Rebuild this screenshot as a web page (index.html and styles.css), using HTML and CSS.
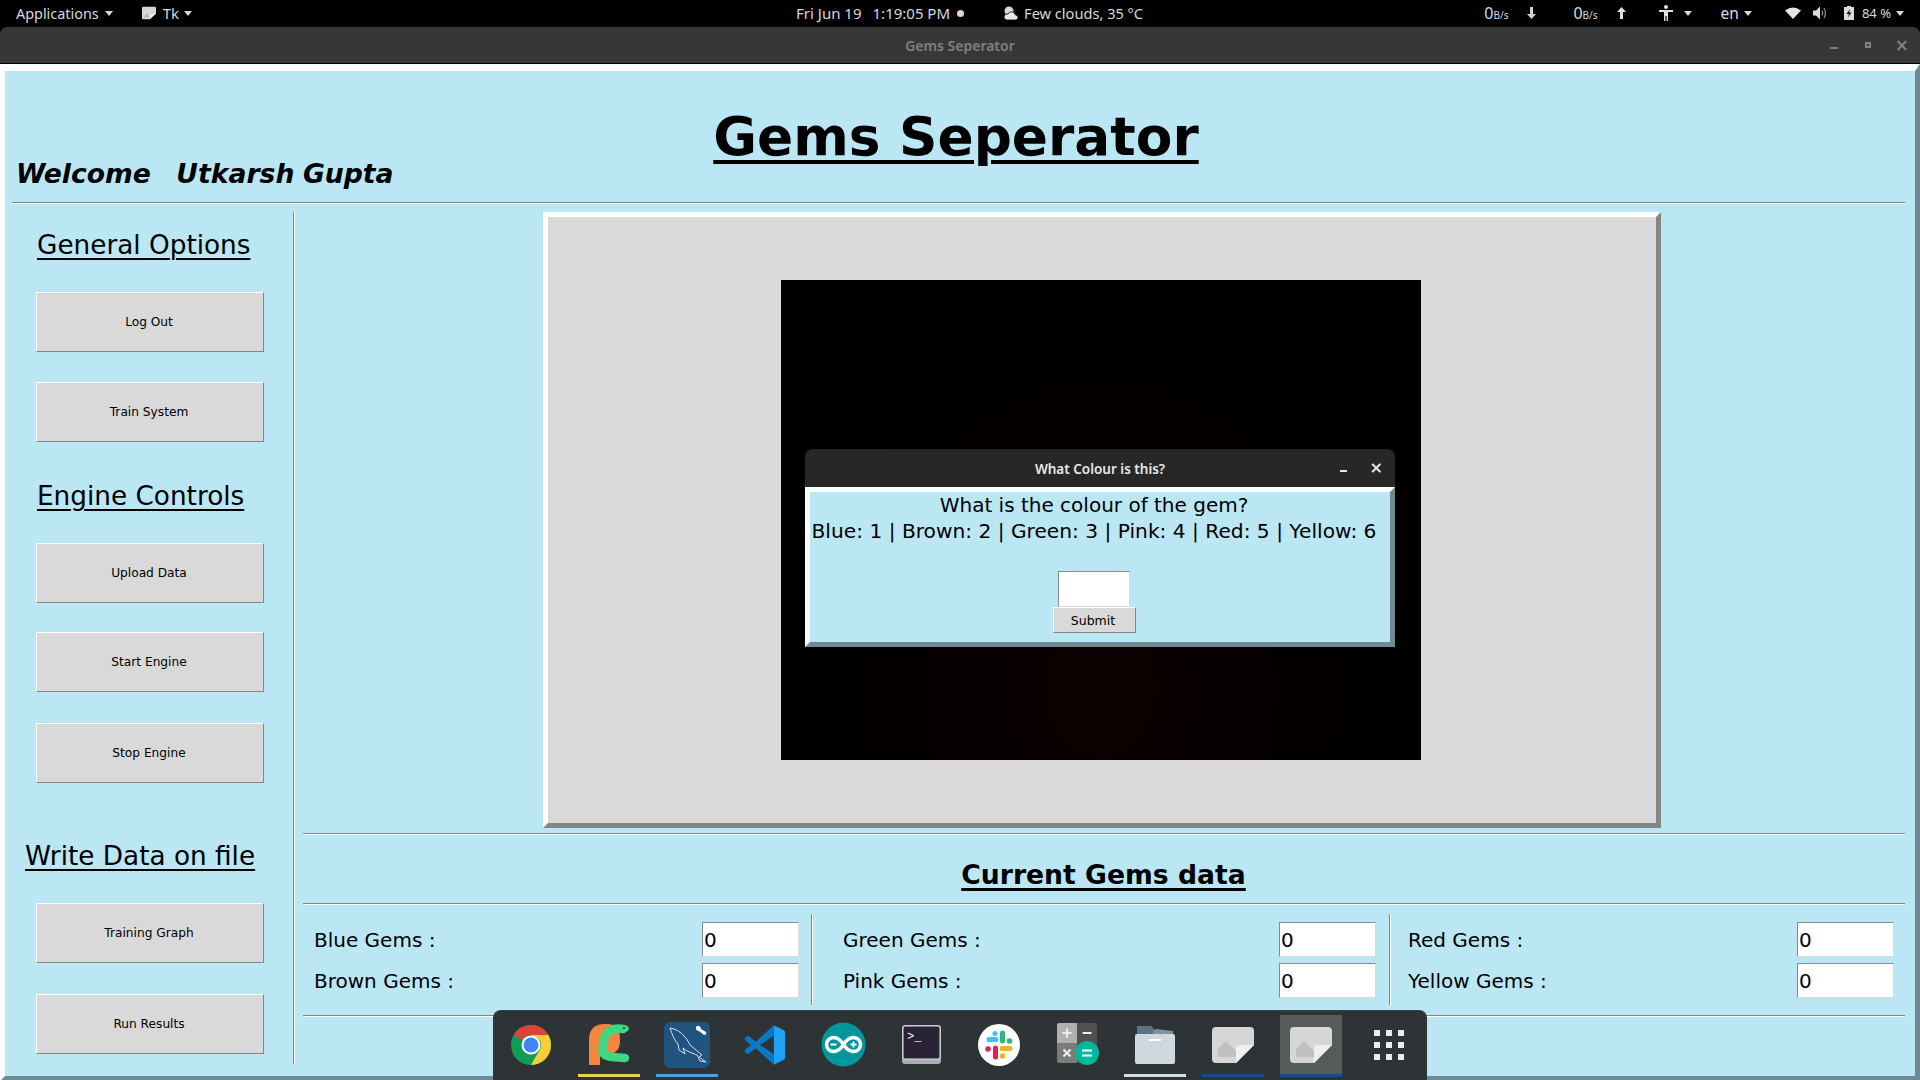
FILE: index.html
```html
<!DOCTYPE html>
<html lang="en">

<head>
  <meta charset="UTF-8">
  <title>Gems Seperator</title>
  <link rel="stylesheet" href="styles.css">
</head>

<body>
  <div class="topbar">
    <span class="tb-apps">Applications</span><i class="caret"></i>
    <svg class="tb-tk" width="14" height="14" viewBox="0 0 42 38"><path d="M4 0H38Q42 0 42 4V20L24 38H4Q0 38 0 34V4Q0 0 4 0Z" fill="#d6d6d6"/><path d="M6 32L14 20L22 32Z" fill="#b5b5b5"/><path d="M25 36V22H41Z" fill="#efefef"/></svg>
    <span class="tb-tkname">Tk</span><i class="caret caret-tk"></i>
    <span class="tb-date">Fri Jun 19</span>
    <span class="tb-time">1:19:05 PM</span>
    <i class="tb-dot"></i>
    <svg class="tb-cloud" width="16" height="16" viewBox="0 0 16 16"><circle cx="6" cy="6" r="4.500" fill="#d8d8d8"/><path d="M4 15a3 3 0 0 1 0-6h1a4 4 0 0 1 7.500 1a2.500 2.500 0 0 1 0 5z" fill="#e8e8e8" stroke="#000" stroke-width=".8"/></svg>
    <span class="tb-weather">Few clouds, 35 °C</span>
    <span class="tb-net tb-net-first">0<small>B/s</small></span>
    <svg class="tb-arrow" width="9" height="12" viewBox="0 0 9 12"><path d="M3 0H6V7H9L4.500 12L0 7H3Z" fill="#c9d4da"/></svg>
    <span class="tb-net tb-net-second">0<small>B/s</small></span>
    <svg class="tb-arrow" width="9" height="12" viewBox="0 0 9 12"><path d="M3 12H6V5H9L4.500 0L0 5H3Z" fill="#d8e2e8"/></svg>
    <svg class="tb-person" width="14" height="16" viewBox="0 0 14 16"><circle cx="7" cy="2" r="2" fill="#e0e0e0"/><path d="M0 5H14V7H9V16H7.600V11H6.400V16H5V7H0Z" fill="#e0e0e0"/></svg>
    <i class="caret caret-person"></i>
    <span class="tb-lang">en</span><i class="caret caret-lang"></i>
    <svg class="tb-wifi" width="16" height="12" viewBox="0 0 16 12"><path d="M0 3.500Q8 -2.500 16 3.500L8 12Z" fill="#e4e4e4"/></svg>
    <svg class="tb-vol" width="15" height="14" viewBox="0 0 15 14"><path d="M0 4.500H3L7 .5V13.500L3 9.500H0Z" fill="#dcdcdc"/><path d="M9 4.500Q10.500 7 9 9.500M11 2Q14 7 11 12" fill="none" stroke="#8a8a8a" stroke-width="1.300"/></svg>
    <svg class="tb-batt" width="10" height="14" viewBox="0 0 10 14"><path d="M3 0H7V1H10V14H0V1H3Z" fill="#dcdcdc"/><path d="M6 3L2.500 8H5L4 11.500L7.500 6.500H5Z" fill="#000"/></svg>
    <span class="tb-pct">84 %</span><i class="caret caret-pct"></i>
  </div>

  <div class="titlebar">
    <span class="titlebar-name">Gems Seperator</span>
    <div class="winbtns">
      <i class="wb-min"></i>
      <i class="wb-max"></i>
      <span class="wb-close">×</span>
    </div>
  </div>

  <div class="window">
    <header class="head">
      <h1 class="app-title">Gems Seperator</h1>
      <p class="welcome">Welcome &nbsp; Utkarsh Gupta</p>
    </header>
    <hr class="rule rule-head">

    <div class="main">
      <aside class="sidebar">
        <h2 class="side-title side-title-general">General Options</h2>
        <button class="side-btn">Log Out</button>
        <button class="side-btn">Train System</button>
        <h2 class="side-title side-title-engine">Engine Controls</h2>
        <button class="side-btn">Upload Data</button>
        <button class="side-btn side-btn-up">Start Engine</button>
        <button class="side-btn">Stop Engine</button>
        <h2 class="side-title side-title-write">Write Data on file</h2>
        <button class="side-btn">Training Graph</button>
        <button class="side-btn side-btn-down">Run Results</button>
      </aside>

      <section class="content">
        <div class="panel">
          <div class="video">
            <div class="dialog">
              <div class="dialog-bar">
                <span class="dialog-name">What Colour is this?</span>
                <i class="dialog-min"></i>
                <span class="dialog-close">×</span>
              </div>
              <div class="dialog-body">
                <p class="dialog-q">What is the colour of the gem?</p>
                <p class="dialog-opts">Blue: 1 | Brown: 2 | Green: 3 | Pink: 4 | Red: 5 | Yellow: 6</p>
                <input class="dialog-input" type="text">
                <button class="dialog-submit">Submit</button>
              </div>
            </div>
          </div>
        </div>

        <hr class="rule">
        <h2 class="data-title">Current Gems data</h2>
        <hr class="rule">

        <div class="gems">
          <div class="gem-col gem-col-a">
            <div class="gem-row"><label>Blue Gems :</label><input class="gem-input" type="text" value="0"></div>
            <div class="gem-row"><label>Brown Gems :</label><input class="gem-input" type="text" value="0"></div>
          </div>
          <div class="gem-col gem-col-b">
            <div class="gem-row"><label>Green Gems :</label><input class="gem-input" type="text" value="0"></div>
            <div class="gem-row"><label>Pink Gems :</label><input class="gem-input" type="text" value="0"></div>
          </div>
          <div class="gem-col gem-col-c">
            <div class="gem-row"><label>Red Gems :</label><input class="gem-input" type="text" value="0"></div>
            <div class="gem-row"><label>Yellow Gems :</label><input class="gem-input" type="text" value="0"></div>
          </div>
        </div>
        <hr class="rule rule-last">
      </section>
    </div>
  </div>

  <div class="dock">
    <div class="dock-item">
      <svg width="40" height="40" viewBox="0 0 40 40">
        <circle cx="20" cy="20" r="20" fill="#0f9d58"/>
        <path d="M20 0A20 20 0 0 1 37.300 10H20A10 10 0 0 0 11.300 15L2.700 10A20 20 0 0 1 20 0Z" fill="#db4437"/>
        <path d="M37.300 10A20 20 0 0 1 20 40L28.700 25A10 10 0 0 0 27 13L20 10Z" fill="#fccd37"/>
        <circle cx="20" cy="20" r="9.500" fill="#fff"/>
        <circle cx="20" cy="20" r="7.500" fill="#4285f4"/>
      </svg>
    </div>
    <div class="dock-item dock-mark-yellow">
      <svg width="40" height="41" viewBox="0 0 40 41">
        <path d="M0 41V16Q0 0 16 0H18Q31 0 31 15V17Q31 30 18 30H11V41Z" fill="#f5843c"/>
        <path d="M34 5C22 3 15 9 15 17C15 22 12 25 14 29C17 34 28 33 36 34" fill="none" stroke="#3fd882" stroke-width="8.500" stroke-linecap="round"/>
        <path d="M26 1H36Q40 2 40 5Q39 9 30 9Z" fill="#3fd882"/>
        <circle cx="35" cy="4" r="1" fill="#143"/>
      </svg>
    </div>
    <div class="dock-item dock-mark-blue">
      <svg width="46" height="46" viewBox="0 0 46 46">
        <rect width="46" height="46" rx="6" fill="#20537e"/>
        <path d="M6 6C14 7 22 14 26 23C30 26 34 30 38 33L35 35L42 40L36 39L33 33C28 31 22 29 19 26L21 32L15 28L14 22C10 18 8 12 6 6Z" fill="none" stroke="#d6e2ea" stroke-width="1"/>
        <path d="M33 9L38 11M32 5A3 3 0 0 0 35 9L40 13Q43 13 42 10L37 7A3 3 0 0 0 33 4Z" fill="#fff"/>
      </svg>
    </div>
    <div class="dock-item">
      <svg width="42" height="42" viewBox="0 0 100 100">
        <path d="M71 3L95 15Q98 17 98 20V80Q98 83 95 85L71 97Z" fill="#21a1f1"/>
        <path d="M71 3L28 42L10 28L2 33V38L16 50L2 62V67L10 72L28 58L71 97V72L38 50L71 28Z" fill="#0a78c4"/>
      </svg>
    </div>
    <div class="dock-item">
      <svg width="45" height="45" viewBox="0 0 45 45">
        <circle cx="22.500" cy="22.500" r="22" fill="#00979c"/>
        <path d="M22.500 22.500C19 17 16 15.500 12.500 15.500A7 7 0 0 0 12.500 29.500C16 29.500 19 28 22.500 22.500C26 17 29 15.500 32.500 15.500A7 7 0 0 1 32.500 29.500C29 29.500 26 28 22.500 22.500Z" fill="none" stroke="#fff" stroke-width="3.500"/>
        <path d="M9.500 22.500H15.500M29.500 22.500H35.500M32.500 19.500V25.500" stroke="#fff" stroke-width="1.800"/>
      </svg>
    </div>
    <div class="dock-item">
      <svg width="39" height="39" viewBox="0 0 39 39">
        <rect width="39" height="39" rx="3" fill="#aab0b1"/>
        <rect x="1" y="1" width="37" height="33" rx="2" fill="#2a2338" stroke="#dfe3e4"/>
        <text x="5" y="15" class="term-text">&gt;_</text>
      </svg>
    </div>
    <div class="dock-item">
      <svg width="42" height="42" viewBox="0 0 42 42">
        <circle cx="21" cy="21" r="21" fill="#fff"/>
        <path d="M11 15.500H18" stroke="#36c5f0" stroke-width="5" stroke-linecap="round"/>
        <path d="M24.500 9V17" stroke="#2eb67d" stroke-width="5" stroke-linecap="round"/>
        <circle cx="31.500" cy="17" r="2.800" fill="#2eb67d"/>
        <circle cx="17" cy="9.500" r="2.500" fill="#36c5f0"/>
        <path d="M24 24.500H32" stroke="#ecb22e" stroke-width="5" stroke-linecap="round"/>
        <circle cx="24.500" cy="32" r="2.800" fill="#ecb22e"/>
        <path d="M17.500 24V33" stroke="#e01e5a" stroke-width="5" stroke-linecap="round"/>
        <circle cx="10" cy="25" r="2.800" fill="#e01e5a"/>
      </svg>
    </div>
    <div class="dock-item">
      <svg class="calc-icon" width="44" height="44" viewBox="0 0 44 44">
        <path d="M2 0H20V20H0V2Q0 0 2 0Z" fill="#b0b0b0"/>
        <path d="M20 0H38Q40 0 40 2V20H20Z" fill="#505050"/>
        <path d="M0 20H20V40H2Q0 40 0 38Z" fill="#7b7b7b"/>
        <path d="M20 20H40V38Q40 40 38 40H20Z" fill="#505050"/>
        <path d="M5.500 10H14.500M10 5.500V14.500M25.500 10H34.500M6.500 26.500L13.500 33.500M13.500 26.500L6.500 33.500" stroke="#eee" stroke-width="2.200"/>
        <circle cx="30" cy="30" r="12" fill="#00b89c"/>
        <path d="M25 27.500H35M25 32.500H35" stroke="#fff" stroke-width="2.200"/>
      </svg>
    </div>
    <div class="dock-item dock-mark-light">
      <svg width="40" height="38" viewBox="0 0 40 38">
        <path d="M2 0H16L21 5H36Q38 5 38 7V16H2Z" fill="#5b7485"/>
        <path d="M18 5L21 3L38 5V12H18Z" fill="#7d95a3"/>
        <rect y="8" width="40" height="30" rx="2" fill="#cfd8df"/>
        <rect x="14" y="13" width="12" height="2" fill="#fff"/>
      </svg>
    </div>
    <div class="dock-item dock-mark-dark">
      <svg width="42" height="36" viewBox="0 0 42 36">
        <path d="M4 0H38Q42 0 42 4V18L24 36H4Q0 36 0 32V4Q0 0 4 0Z" fill="#d6d6d6"/>
        <path d="M6 30V22L14 14L24 24V30Z" fill="#c0c0c0"/>
        <path d="M24 36V22Q24 18 28 18H42Z" fill="#efefef"/>
      </svg>
    </div>
    <div class="dock-item dock-mark-dark dock-active">
      <svg width="42" height="36" viewBox="0 0 42 36">
        <path d="M4 0H38Q42 0 42 4V18L24 36H4Q0 36 0 32V4Q0 0 4 0Z" fill="#d6d6d6"/>
        <path d="M6 30V22L14 14L24 24V30Z" fill="#c0c0c0"/>
        <path d="M24 36V22Q24 18 28 18H42Z" fill="#efefef"/>
      </svg>
    </div>
    <div class="dock-item">
      <div class="apps-grid">
        <i></i><i></i><i></i><i></i><i></i><i></i><i></i><i></i><i></i>
      </div>
    </div>
  </div>
</body>

</html>
```

FILE: styles.css
```css
* {
  box-sizing: border-box;
}

html,
body {
  margin: 0;
  padding: 0;
}

body {
  width: 1920px;
  height: 1080px;
  overflow: hidden;
  position: relative;
  background-color: #000;
  font-family: 'DejaVu Sans', sans-serif;
  color: #000;
}

/* top bar */
.topbar {
  height: 27px;
  padding-right: 16px;
  padding-bottom: 1px;
  background-color: #000;
  color: #d8d8d8;
  font-family: 'Noto Sans', sans-serif;
  font-size: 15px;
  display: flex;
  align-items: center;
}

.caret {
  display: block;
  width: 0;
  height: 0;
  margin-left: 6px;
  border-left: 4.5px solid transparent;
  border-right: 4.5px solid transparent;
  border-top: 5px solid #d8d8d8;
}

.tb-apps {
  margin-left: 16px;
  font-size: 14.4px;
}

.tb-tk {
  margin-left: 29px;
}

.tb-tkname {
  margin-left: 7px;
}

.caret-tk {
  margin-left: 5px;
}

.tb-date {
  margin-left: 604px;
}

.tb-time {
  margin-left: 11px;
}

.tb-dot {
  width: 7px;
  height: 7px;
  margin-left: 7px;
  border-radius: 50%;
  background-color: #d8d8d8;
}

.tb-cloud {
  margin-left: 39px;
}

.tb-weather {
  margin-left: 5px;
  font-size: 14.6px;
}

.tb-net {
  color: #cfdde6;
  font-size: 16px;
}

.tb-net small {
  font-size: 10px;
}

.tb-net-first {
  margin-left: auto;
}

.tb-net-second {
  margin-left: 37px;
}

.tb-arrow {
  margin-left: 19px;
}

.tb-person {
  margin-left: 33px;
}

.caret-person {
  margin-left: 11px;
}

.tb-lang {
  margin-left: 29px;
  font-size: 15.5px;
  color: #cfdde6;
}

.caret-lang {
  margin-left: 5px;
}

.tb-wifi {
  margin-left: 33px;
}

.tb-vol {
  margin-left: 12px;
}

.tb-batt {
  margin-left: 16px;
}

.tb-pct {
  margin-left: 8px;
  font-size: 13px;
}

.caret-pct {
  margin-left: 5px;
}

/* window title */
.titlebar {
  height: 36px;
  position: relative;
  background-color: #373737;
  border-radius: 7px 7px 0 0;
  display: flex;
  align-items: center;
  justify-content: center;
}

.titlebar-name {
  color: #808080;
  font-family: 'Noto Sans', sans-serif;
  font-size: 14px;
  font-weight: 600;
}

.winbtns {
  position: absolute;
  right: 0;
  top: 0;
  bottom: 0;
}

.wb-min {
  position: absolute;
  right: 82px;
  top: 20px;
  width: 8px;
  height: 2px;
  background-color: #808080;
}

.wb-max {
  position: absolute;
  right: 49px;
  top: 15px;
  width: 6px;
  height: 6px;
  border: 2px solid #808080;
}

.wb-close {
  position: absolute;
  right: 11px;
  top: 8px;
  color: #808080;
  font-size: 17px;
  line-height: 20px;
  font-weight: bold;
}

/* main window */
.window {
  height: 1017px;
  margin-top: 1px;
  background-color: #bbe7f5;
  border-top: 7px solid #fff;
  border-left: 5px solid #fff;
  border-right: 5px solid #6f8a92;
  border-bottom: 5px solid #6f8a92;
  box-shadow: 0 -1px 0 #000;
}

.head {
  height: 131px;
}

.app-title {
  margin: 0;
  padding-top: 33px;
  padding-right: 8px;
  text-align: center;
  font-size: 53.33px;
  line-height: 66px;
  font-weight: bold;
  text-decoration: underline;
  text-decoration-thickness: 4px;
  text-underline-offset: 5px;
}

.welcome {
  margin: 0;
  padding-left: 11px;
  font-size: 26.67px;
  line-height: 30px;
  font-weight: bold;
  font-style: italic;
  white-space: pre;
  word-spacing: -0.8px;
  margin-top: -11px;
}

.rule {
  margin: 0;
  height: 2px;
  border: 0;
  border-top: 1px solid #848484;
  border-bottom: 1px solid #fff;
}

.rule-head {
  margin: 0 10px 0 7px;
}

.main {
  display: flex;
  margin-top: 8px;
  height: 852px;
}

.sidebar {
  width: 289px;
  flex: none;
  border-right: 1px solid #848484;
  box-shadow: 1px 0 0 #fff;
  padding-left: 31px;
}

.side-title {
  margin: 0;
  font-size: 26.3px;
  line-height: 32px;
  font-weight: normal;
  text-decoration: underline;
  text-decoration-thickness: 2px;
  text-underline-offset: 4px;
}

.side-title-general {
  height: 80px;
  padding: 17px 0 0 1px;
}

.side-title-engine {
  height: 71px;
  padding: 8px 0 0 1px;
}

.side-title-write {
  height: 90px;
  margin-left: -11px;
  padding: 27px 0 0;
}

.side-btn {
  display: block;
  width: 228px;
  height: 60px;
  margin: 0 0 30px;
  padding: 0 2px 0 0;
  background-color: #d9d9d9;
  border-style: solid;
  border-width: 1px;
  border-color: #fff #858585 #858585 #fff;
  font-family: 'DejaVu Sans', sans-serif;
  font-size: 12.2px;
  color: #000;
}

.side-btn-up {
  margin-top: -1px;
  margin-bottom: 31px;
}

.side-btn-down {
  margin-top: 31px;
}

.content {
  flex: 1;
  min-width: 0;
  padding: 0 10px 0 9px;
}

.panel {
  width: 1118px;
  height: 616px;
  margin-left: 240px;
  padding-top: 63px;
  background-color: #d9d9d9;
  border-style: solid;
  border-width: 5px;
  border-color: #fff #858585 #858585 #fff;
}

.panel + .rule {
  margin-top: 5px;
}

.video {
  position: relative;
  width: 640px;
  height: 480px;
  margin-left: 233px;
  background: radial-gradient(ellipse at 50% 85%, #0b0101 0%, #040000 50%, #000 75%);
}

.dialog {
  position: absolute;
  left: 24px;
  top: 169px;
  width: 590px;
}

.dialog-bar {
  height: 38px;
  position: relative;
  background-color: #272727;
  border-radius: 8px 8px 0 0;
  display: flex;
  align-items: center;
  justify-content: center;
  color: #e8e8e8;
}

.dialog-name {
  font-family: 'Noto Sans', sans-serif;
  font-size: 13.5px;
  font-weight: 600;
  margin-top: 1px;
}

.dialog-min {
  position: absolute;
  right: 48px;
  top: 21px;
  width: 7px;
  height: 2px;
  background-color: #e8e8e8;
}

.dialog-close {
  position: absolute;
  right: 12px;
  top: 10px;
  font-size: 16px;
  line-height: 18px;
  font-weight: bold;
}

.dialog-body {
  height: 160px;
  background-color: #bbe7f5;
  border-style: solid;
  border-width: 5px;
  border-color: #fff #6f8a92 #6f8a92 #fff;
  display: flex;
  flex-direction: column;
  align-items: center;
  padding-right: 12px;
}

.dialog-q,
.dialog-opts {
  margin: 0;
  line-height: 26px;
  white-space: nowrap;
}

.dialog-q {
  font-size: 20px;
}

.dialog-opts {
  font-size: 20.2px;
}

.dialog-input {
  width: 72px;
  height: 36px;
  margin-top: 27px;
  background-color: #fff;
  border-style: solid;
  border-width: 1px;
  border-color: #8a8a8a #d9d9d9 #d9d9d9 #8a8a8a;
  flex: none;
}

.dialog-submit {
  width: 83px;
  height: 26px;
  padding: 0 2px 0 0;
  background-color: #d9d9d9;
  border-style: solid;
  border-width: 1px;
  border-color: #fff #858585 #858585 #fff;
  font-family: 'DejaVu Sans', sans-serif;
  font-size: 12.5px;
  color: #000;
  flex: none;
}

.data-title {
  margin: 0;
  height: 68px;
  padding-top: 25px;
  padding-right: 1px;
  text-align: center;
  font-size: 26.67px;
  line-height: 30px;
  font-weight: bold;
  text-decoration: underline;
  text-decoration-thickness: 3px;
  text-underline-offset: 4px;
}

.gems {
  display: flex;
  height: 91px;
  margin-top: 9px;
}

.gem-col {
  display: flex;
  flex-direction: column;
  gap: 6px;
  padding-top: 8px;
  border-right: 1px solid #848484;
  box-shadow: 1px 0 0 #fff;
}

.gem-col-a {
  width: 509px;
  padding-left: 11px;
  padding-right: 12px;
}

.gem-col-b {
  width: 578px;
  padding-left: 31px;
  padding-right: 13px;
}

.gem-col-c {
  flex: 1;
  padding-left: 18px;
  padding-right: 11px;
  border-right: 0;
  box-shadow: none;
}

.gem-row {
  display: flex;
  align-items: center;
  justify-content: space-between;
  height: 35px;
  font-size: 20px;
}

.gem-input {
  width: 97px;
  height: 35px;
  padding: 0 1px;
  background-color: #fff;
  border-style: solid;
  border-width: 1px;
  border-color: #8a8a8a #d9d9d9 #d9d9d9 #8a8a8a;
  font-family: 'DejaVu Sans', sans-serif;
  font-size: 20px;
  color: #000;
}

.rule-last {
  margin-top: 10px;
}

/* dock */
.dock {
  position: absolute;
  left: 493px;
  top: 1010px;
  width: 934px;
  height: 70px;
  padding: 4px 7px 0;
  display: flex;
  gap: 16px;
  background-color: #2e3336;
  border-top: 1px solid #3a3f42;
  border-radius: 8px 8px 0 0;
}

.dock-item {
  width: 62px;
  height: 62px;
  display: flex;
  align-items: center;
  justify-content: center;
  border-bottom: 3px solid transparent;
}

.dock-mark-yellow {
  border-bottom-color: #e7d54c;
}

.dock-mark-blue {
  border-bottom-color: #4a9fe0;
}

.dock-mark-light {
  border-bottom-color: #cfe0e8;
}

.dock-mark-dark {
  border-bottom-color: #1b4a8d;
}

.dock-active {
  background-color: #565c5c;
}

.calc-icon {
  margin-left: 4px;
}

.term-text {
  fill: #eee;
  font-family: 'Liberation Mono', monospace;
  font-size: 12px;
}

.apps-grid {
  display: grid;
  grid-template-columns: repeat(3, 6px);
  grid-auto-rows: 6px;
  gap: 6px;
}

.apps-grid i {
  background-color: #eee;
}
```
